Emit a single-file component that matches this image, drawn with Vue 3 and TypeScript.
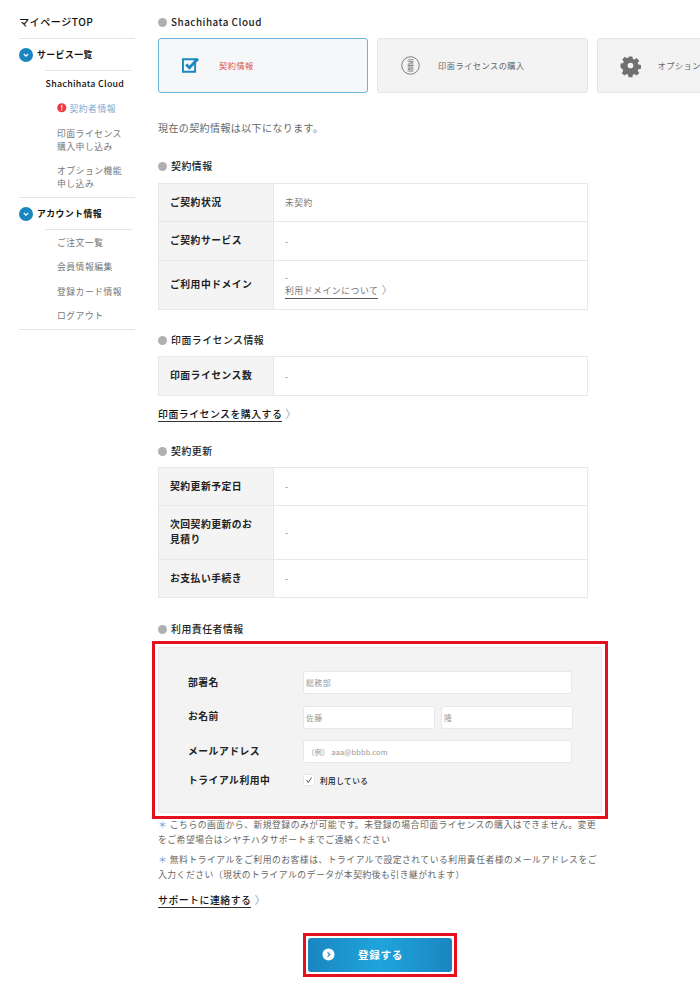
<script setup lang="ts">
interface Row { label: string; value: string; h: number; domain?: boolean }
const contract: Row[] = [
  { label: 'ご契約状況', value: '未契約', h: 38 },
  { label: 'ご契約サービス', value: '-', h: 39 },
  { label: 'ご利用中ドメイン', value: '-', h: 49, domain: true },
]
const license: Row[] = [{ label: '印面ライセンス数', value: '-', h: 39 }]
const renewal: Row[] = [
  { label: '契約更新予定日', value: '-', h: 38 },
  { label: '次回契約更新のお見積り', value: '-', h: 54 },
  { label: 'お支払い手続き', value: '-', h: 38 },
]
</script>

<template>
  <div class="page">
    <aside class="side">
      <div class="top">マイページTOP</div>
      <div class="group">
        <svg class="chev" viewBox="0 0 14 14"><circle cx="7" cy="7" r="7" fill="#1a86c0" /><path d="M4.800 6l2.200 2.200L9.200 6" fill="none" stroke="#fff" stroke-width="1.100" /></svg>
        サービス一覧
      </div>
      <div class="sub">
        <div class="sub-title">Shachihata Cloud</div>
        <div class="item active">
          <svg class="alert" viewBox="0 0 10 10"><circle cx="5" cy="5" r="4.800" fill="#ee3b3f" /><rect x="4.400" y="2" width="1.200" height="3.800" fill="#fff" /><rect x="4.400" y="6.600" width="1.200" height="1.300" fill="#fff" /></svg>
          契約者情報
        </div>
        <div class="item two">印面ライセンス<br />購入申し込み</div>
        <div class="item two">オプション機能<br />申し込み</div>
      </div>
      <div class="group group-2">
        <svg class="chev" viewBox="0 0 14 14"><circle cx="7" cy="7" r="7" fill="#1a86c0" /><path d="M4.800 6l2.200 2.200L9.200 6" fill="none" stroke="#fff" stroke-width="1.100" /></svg>
        アカウント情報
      </div>
      <div class="sub sub-2">
        <div class="item">ご注文一覧</div>
        <div class="item">会員情報編集</div>
        <div class="item">登録カード情報</div>
        <div class="item">ログアウト</div>
      </div>
    </aside>

    <main class="main">
      <h2 class="head">Shachihata Cloud</h2>
      <div class="tabs">
        <div class="tab on">
          <svg class="tab-icon" viewBox="0 0 20 20"><path d="M1 3.400h12.800v13.200H1z" fill="none" stroke="#1a86c0" stroke-width="2" /><path d="M4.400 8.800l3.400 3.600 9-9.600" fill="none" stroke="#1a86c0" stroke-width="3" /></svg>
          <span class="tab-text red">契約情報</span>
        </div>
        <div class="tab">
          <svg class="tab-icon" viewBox="0 0 20 20"><circle cx="10" cy="10" r="9.200" fill="none" stroke="#777" stroke-width="1" /><text x="10" y="2.800" class="stamp">渡藤</text></svg>
          <span class="tab-text">印面ライセンスの購入</span>
        </div>
        <div class="tab">
          <svg class="tab-icon" viewBox="0 0 20 20"><path fill="#707070" fill-rule="evenodd" d="M8 .4h4l.5 2.700 1.600.7 2.300-1.600 2.800 2.800-1.600 2.300.7 1.600 2.700.5v4l-2.700.5-.7 1.600 1.600 2.300-2.800 2.800-2.300-1.600-1.600.7-.5 2.700H8l-.5-2.700-1.600-.7-2.300 1.600-2.800-2.800 1.600-2.300-.7-1.600L-.5 12V8l2.700-.5.7-1.600L1.300 3.600 4.100.8 6.400 2.400 8 1.700zM10 7a3 3 0 1 0 0 6 3 3 0 0 0 0-6z" /></svg>
          <span class="tab-text">オプション機能の申し込み</span>
        </div>
      </div>

      <p class="lead">現在の契約情報は以下になります。</p>

      <h2 class="head head-1">契約情報</h2>
      <div class="table">
        <div v-for="r in contract" :key="r.label" class="row" :style="{ height: r.h + 'px' }">
          <div class="th">{{ r.label }}</div>
          <div class="td">
            <div>{{ r.value }}</div>
            <div v-if="r.domain" class="dom"><span class="dom-link">利用ドメインについて</span><span class="gt">〉</span></div>
          </div>
        </div>
      </div>

      <h2 class="head head-2">印面ライセンス情報</h2>
      <div class="table">
        <div v-for="r in license" :key="r.label" class="row" :style="{ height: r.h + 'px' }">
          <div class="th">{{ r.label }}</div>
          <div class="td">{{ r.value }}</div>
        </div>
      </div>
      <div class="link link-1"><span class="link-text">印面ライセンスを購入する</span><span class="gt">〉</span></div>

      <h2 class="head head-3">契約更新</h2>
      <div class="table">
        <div v-for="r in renewal" :key="r.label" class="row" :style="{ height: r.h + 'px' }">
          <div class="th">{{ r.label }}</div>
          <div class="td">{{ r.value }}</div>
        </div>
      </div>

      <h2 class="head head-4">利用責任者情報</h2>
      <div class="mark mark-form">
        <form class="panel" @submit.prevent>
          <div class="f-row">
            <label class="f-label">部署名</label>
            <input class="inp" placeholder="総務部" />
          </div>
          <div class="f-row">
            <label class="f-label">お名前</label>
            <div class="pair">
              <input class="inp" placeholder="佐藤" />
              <input class="inp" placeholder="隆" />
            </div>
          </div>
          <div class="f-row">
            <label class="f-label">メールアドレス</label>
            <input class="inp mail" placeholder="（例） aaa@bbbb.com" />
          </div>
          <div class="f-row f-check">
            <label class="f-label">トライアル利用中</label>
            <div class="check-wrap">
              <span class="check"><svg viewBox="0 0 12 12"><path d="M3 6l2.200 3L9 3" fill="none" stroke="#333" stroke-width="1" /></svg></span>
              <span class="check-text">利用している</span>
            </div>
          </div>
        </form>
      </div>

      <p class="note note-1"><span class="ast">＊</span> こちらの画面から、新規登録のみが可能です。未登録の場合印面ライセンスの購入はできません。変更をご希望場合はシヤチハタサポートまでご連絡ください</p>
      <p class="note note-2"><span class="ast">＊</span> 無料トライアルをご利用のお客様は、トライアルで設定されている利用責任者様のメールアドレスをご入力ください（現状のトライアルのデータが本契約後も引き継がれます）</p>
      <div class="link link-2"><span class="link-text">サポートに連絡する</span><span class="gt">〉</span></div>

      <div class="btn-wrap">
        <div class="mark">
          <button class="btn" type="button">
            <svg class="btn-icon" viewBox="0 0 14 14"><circle cx="7" cy="7" r="6.500" fill="#fff" /><path d="M6 4.600L8.400 7 6 9.400" fill="none" stroke="#1a86c0" stroke-width="1.200" /></svg>
            <span>登録する</span>
          </button>
        </div>
      </div>
    </main>
  </div>
</template>

<style>
html, body { margin: 0; padding: 0; background: #fff; }
</style>

<style scoped>
.page {
  width: 700px;
  height: 1005px;
  overflow: hidden;
  display: flex;
  background: #fff;
  color: #666;
  font-family: "Noto Sans CJK JP", "Noto Sans", sans-serif;
  font-size: 10px;
  letter-spacing: 0.05em;
}
.side { width: 116px; margin-left: 19px; flex: none; padding-top: 14px; }
.top { font-size: 10.100px; font-weight: 500; color: #111; line-height: 16px; padding-bottom: 8px; border-bottom: 1px solid #e6e6e6; }
.group { display: flex; align-items: center; gap: 4px; height: 31px; font-size: 8.800px; font-weight: 700; color: #111; }
.chev { width: 14px; height: 14px; flex: none; }
.group-2 { border-top: 1px solid #e6e6e6; }
.sub { margin-left: 26px; margin-right: 3px; border-top: 1px solid #e6e6e6; padding-bottom: 7px; }
.sub-title { font-size: 8.900px; font-weight: 500; color: #111; line-height: 14px; margin-top: 6px; letter-spacing: .03em; padding-left: .500px; }
.item { margin-left: 12px; line-height: 13px; margin-top: 12px; white-space: nowrap; display: flex; align-items: center; font-size: 8.800px; color: #777; }
.item.two { display: block; }
.two + .two { margin-top: 11.500px; }
.sub-title + .item { margin-top: 10.500px; }
.active { color: #7aa9d2; gap: 3px; }
.alert { width: 9.500px; height: 9.500px; flex: none; }
.sub-2 { padding-bottom: 6.500px; }
.sub-2 .item { margin-top: 11.600px; }
.sub-2 .item:first-child { margin-top: 5.500px; }
.sub-2::after { content: ""; display: block; height: 1px; background: #e6e6e6; margin: 6.500px -3px 0 -26px; }

.main { width: 542px; margin-left: 23px; flex: none; padding-top: 14px; }
.head { margin: 0; display: flex; align-items: center; gap: 4px; box-sizing: border-box; height: 15px; padding-top: 1px; font-size: 9.900px; line-height: 14px; font-weight: 500; color: #222; }
.head::before { content: ""; width: 9px; height: 9px; border-radius: 50%; background: #b0b0b0; flex: none; }
.tabs { display: flex; gap: 9px; margin-top: 9px; width: 700px; }
.tab { width: 210px; height: 55px; box-sizing: border-box; flex: none; border: 1px solid #e5e5e5; border-radius: 3px; background: #f3f3f3; display: flex; align-items: center; padding-left: 23px; }
.tab + .tab { width: 210.500px; }
.tab.on { border-color: #6db3dc; background: #f5f7f8; }
.tab-icon { width: 19px; height: 19px; flex: none; overflow: visible; }
.stamp { font-size: 7px; fill: #777; writing-mode: vertical-rl; letter-spacing: .2px; }
.tab-text { margin: 0 0 2px 18px; font-size: 8.200px; color: #666; white-space: nowrap; }
.red { color: #e0564f; }
.lead { margin: 26px 0 0; font-size: 10px; line-height: 18px; color: #666; letter-spacing: 0.04em; }
.head-1 { margin-top: 21px; }
.head-1 + .table { margin-top: 10px; }
.head-2 { margin-top: 22px; }
.head-3 { margin-top: 21px; }
.head-4 { margin-top: 23px; }
.table { margin-top: 9px; width: 430px; border: 1px solid #e8e8e8; border-bottom: 0; box-sizing: border-box; }
.row { display: flex; border-bottom: 1px solid #e8e8e8; box-sizing: border-box; }
.th { width: 115px; flex: none; box-sizing: border-box; background: #f4f4f4; border-right: 1px solid #e8e8e8; padding: 0 11px 1px; display: flex; align-items: center; font-size: 9.800px; line-height: 15px; font-weight: 700; color: #222; }
.td { flex: 1; padding: 0 11px; display: flex; flex-direction: column; justify-content: center; font-size: 8.700px; line-height: 13px; color: #777; }
.dom { white-space: nowrap; font-size: 8.900px; }
.dom-link { border-bottom: 1px solid #555; display: inline-block; line-height: 12px; padding-bottom: 1px; }
.gt { color: #8aa9c8; font-size: 11px; line-height: 0; font-weight: 400; margin-left: 3px; }
.link { font-size: 9.900px; font-weight: 500; color: #111; line-height: 14px; height: 15px; }
.link-text { display: inline-block; border-bottom: 1px solid #333; }
.link-1 { margin-top: 11px; }
.mark { border: 3px solid #e60f1e; padding: 2px; width: fit-content; }
.mark-form { padding: 3px; margin: 5px 0 0 -6px; }
.panel { width: 444px; height: 166px; box-sizing: border-box; background: #f3f3f3; border: 1px solid #e6e6e6; border-radius: 2px; padding: 23px 29px 0 29px; }
.f-row { display: flex; align-items: center; height: 23px; margin-bottom: 11.500px; }
.f-label { width: 115px; flex: none; padding-bottom: 2px; font-size: 9.800px; font-weight: 700; color: #222; white-space: nowrap; }
.inp { width: 270px; height: 23px; box-sizing: border-box; border: 1px solid #e8e8e8; border-radius: 2px; background: #fff; padding: 0 2px; font-family: inherit; font-size: 8px; letter-spacing: .04em; outline: none; min-width: 0; }
.inp::placeholder { color: #999; opacity: 1; }
.mail { padding-left: 3px; font-size: 7.400px; letter-spacing: .02em; }
.pair { display: flex; gap: 6px; width: 270px; }
.pair .inp { width: 132px; }
.f-check { margin-top: -5px; }
.check-wrap { display: flex; align-items: center; gap: 5px; margin-top: -2px; }
.check { width: 12px; height: 12px; box-sizing: border-box; background: #fff; border: 1px solid #e8e8e8; display: block; }
.check svg { display: block; width: 10px; height: 10px; }
.check-text { font-size: 7.600px; font-weight: 500; color: #222; }
.note { margin: 0; font-size: 8.800px; line-height: 14.500px; color: #666; width: 444px; }
.note-1 { margin-top: -1px; }
.note-2 { margin-top: 6px; }
.ast { color: #6e9fcb; }
.link-2 { margin-top: 11px; }
.btn-wrap { width: 444px; display: flex; justify-content: center; margin-top: 25px; }
.btn { display: flex; width: 144px; height: 34px; border: 0; border-radius: 3px; background: linear-gradient(90deg, #1a86c0, #1fa4dc 50%, #1a86c0); color: #fff; align-items: center; padding: 0 0 2px 14px; font-family: inherit; font-size: 10.700px; font-weight: 700; letter-spacing: .05em; }
.btn-icon { width: 13px; height: 13px; flex: none; margin-right: 23px; }
</style>
